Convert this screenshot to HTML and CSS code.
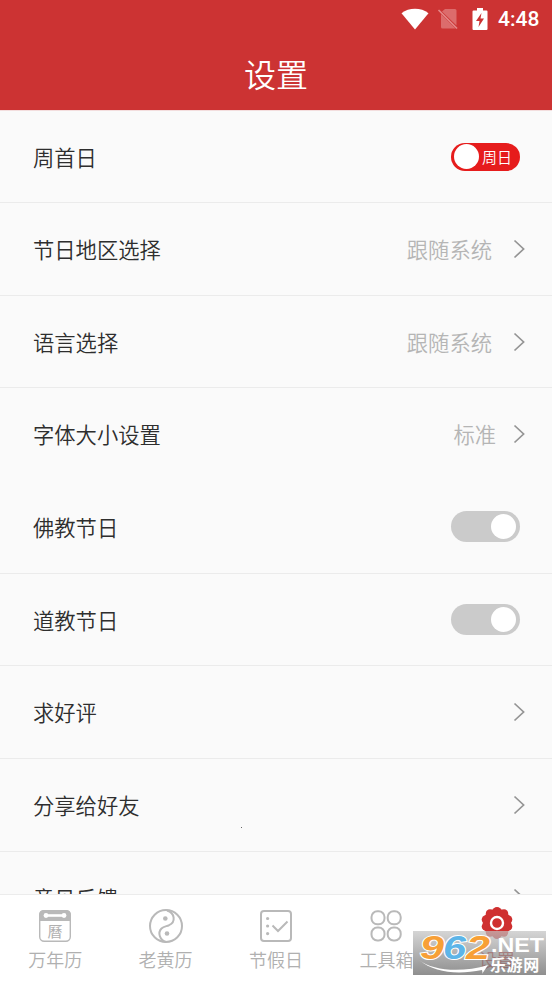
FILE: index.html
```html
<!DOCTYPE html>
<html lang="zh-CN">
<head>
<meta charset="utf-8">
<title>设置</title>
<link rel="stylesheet" href="styles.css">
</head>
<body>
<div class="app">
  <header class="header">
    <div class="status">
      <svg class="wifi" width="28" height="22" viewBox="0 0 28 22"><path d="M.5 5.200C8-.6 20-.6 27.500 5.200L14 21.500z" fill="#fff"/></svg>
      <svg class="sim" width="22" height="22" viewBox="0 0 22 22"><path d="M8 1h10q1.500 0 1.500 1.500v15L5 3.500zM4 6l14.500 14.500H5.500Q4 20.500 4 19z" fill="#dc6c6c"/><path d="M1.500 2l18.500 18.500" stroke="#e58a8a" stroke-width="1.600"/></svg>
      <svg class="battery" width="16" height="22" viewBox="0 0 16 22"><path d="M5 0h6v2.500h3.500q1 0 1 1V21q0 1-1 1h-13q-1 0-1-1V3.500q0-1 1-1H5z" fill="#fff"/><path d="M9.500 5L4 13h3.500l-1 6L12 10.500H8.500z" fill="#c33"/></svg>
      <span class="time">4:48</span>
    </div>
    <h1 class="title">设置</h1>
  </header>
  <main class="list">
    <div class="row"><span>周首日</span><span class="toggle toggle-on"><i class="knob"></i><b>周日</b></span></div>
    <div class="row"><span>节日地区选择</span><span class="value">跟随系统</span><svg class="chevron" viewBox="0 0 12 20"><path d="M1.500 1.500L10.600 10l-9.100 8.500"/></svg></div>
    <div class="row"><span>语言选择</span><span class="value">跟随系统</span><svg class="chevron" viewBox="0 0 12 20"><path d="M1.500 1.500L10.600 10l-9.100 8.500"/></svg></div>
    <div class="row plain"><span>字体大小设置</span><span class="value short">标准</span><svg class="chevron" viewBox="0 0 12 20"><path d="M1.500 1.500L10.600 10l-9.100 8.500"/></svg></div>
    <div class="row"><span>佛教节日</span><span class="toggle"><i class="knob"></i></span></div>
    <div class="row"><span>道教节日</span><span class="toggle"><i class="knob"></i></span></div>
    <div class="row"><span>求好评</span><svg class="chevron" viewBox="0 0 12 20"><path d="M1.500 1.500L10.600 10l-9.100 8.500"/></svg></div>
    <div class="row"><span>分享给好友</span><svg class="chevron" viewBox="0 0 12 20"><path d="M1.500 1.500L10.600 10l-9.100 8.500"/></svg><i class="speck"></i></div>
    <div class="row"><span>意见反馈</span><svg class="chevron" viewBox="0 0 12 20"><path d="M1.500 1.500L10.600 10l-9.100 8.500"/></svg></div>
  </main>
  <nav class="tabs">
    <div class="tab">
      <svg class="icon" viewBox="0 0 36 36" fill="none" stroke="#b9b9b9"><rect x="2.700" y="2.700" width="30.600" height="30.600" rx="4.500" stroke-width="1.400"/><path d="M2 13V7q0-5 5-5h22q5 0 5 5v6z" fill="#b9b9b9" stroke="none"/><path d="M10 7.500h16" stroke="#fff" stroke-width="2.600"/><circle cx="9" cy="7.500" r="2.400" fill="#fff" stroke="none"/><circle cx="27" cy="7.500" r="2.400" fill="#fff" stroke="none"/><text class="glyph" x="10.500" y="29.300">曆</text></svg>
      <span>万年历</span>
    </div>
    <div class="tab">
      <svg class="icon" viewBox="0 0 36 36" fill="none" stroke="#b9b9b9" stroke-width="2"><circle cx="18" cy="18" r="16"/><path d="M19 2.500C27 5 28 14 21 17.200c-3 1.200-5.500 1.300-7.500 3.300-4 4-2 11.500 4.500 13.500"/><circle cx="17.300" cy="10.500" r="2.300" fill="#b9b9b9" stroke="none"/><circle cx="19" cy="25.500" r="2.300" fill="#b9b9b9" stroke="none"/></svg>
      <span>老黄历</span>
    </div>
    <div class="tab">
      <svg class="icon" viewBox="0 0 36 36" fill="none" stroke="#b9b9b9" stroke-width="2"><rect x="3" y="3" width="30" height="30" rx="3"/><path d="M14.500 17.500l5.500 5.500 9.500-9.500"/><g fill="#b9b9b9" stroke="none"><circle cx="9.600" cy="10.500" r="1.600"/><circle cx="9.600" cy="18" r="1.600"/><circle cx="9.600" cy="25.600" r="1.600"/></g></svg>
      <span>节假日</span>
    </div>
    <div class="tab">
      <svg class="icon" viewBox="0 0 36 36" fill="none" stroke="#b9b9b9" stroke-width="2"><rect x="3.500" y="3.300" width="13" height="13" rx="5.800"/><rect x="19.700" y="3.300" width="13" height="13" rx="5.800"/><rect x="3.500" y="19.500" width="13" height="13" rx="5.800"/><rect x="19.700" y="19.500" width="13" height="13" rx="5.800"/></svg>
      <span>工具箱</span>
    </div>
    <div class="tab active">
      <svg class="icon" viewBox="0 0 36 36" fill="#cf3030"><circle cx="18" cy="15" r="14.200"/><circle cx="18" cy="3.500" r="4.500"/><circle cx="25" cy="5.500" r="4.200"/><circle cx="29" cy="11.500" r="4.300"/><circle cx="29" cy="18.500" r="4.300"/><circle cx="25" cy="24.500" r="4.200"/><circle cx="18" cy="26.500" r="4.500"/><circle cx="11" cy="24.500" r="4.200"/><circle cx="7" cy="18.500" r="4.300"/><circle cx="7" cy="11.500" r="4.300"/><circle cx="11" cy="5.500" r="4.200"/><circle cx="18" cy="15" r="6" fill="none" stroke="#fff" stroke-width="2.400"/></svg>
      <span>设置</span>
    </div>
  </nav>
  <div class="watermark">
    <svg width="133" height="44" viewBox="0 0 133 44">
      <g class="digits"><text x="7" y="28" textLength="24" lengthAdjust="spacingAndGlyphs" fill="#f7a037">9</text><text x="30" y="28" textLength="23" lengthAdjust="spacingAndGlyphs" fill="#5db5e8">6</text><text x="53" y="28" textLength="24" lengthAdjust="spacingAndGlyphs" fill="#f7a037">2</text></g>
      <path d="M6 29c14 11 43 13 69 5l-6 9c1-2 0-3 0-4-24 5-47 3-63-10z" fill="#fff"/>
      <text class="net" x="78" y="21" textLength="53" lengthAdjust="spacingAndGlyphs">.NET</text>
      <text class="site" x="77" y="39.500">乐游网</text>
    </svg>
  </div>
</div>
</body>
</html>
```
FILE: styles.css
```css
* { box-sizing: border-box; }
body {
  margin: 0;
  font-family: "Noto Sans CJK SC", sans-serif;
  font-weight: 350;
  color: #2e2e2e;
}
.app {
  position: relative;
  display: flex;
  flex-direction: column;
  height: 981px;
  overflow: hidden;
  background: #fafafa;
}
.header {
  flex: 0 0 110px;
  background: #cc3333;
  color: #fff;
}
.status {
  display: flex;
  justify-content: flex-end;
  align-items: center;
  height: 37px;
  padding-right: 13px;
}
.wifi { margin-right: 8px; }
.sim { margin-right: 13px; }
.battery { margin-right: 10px; }
.time {
  width: 41px;
  font: 500 21px/38px Roboto, sans-serif;
  white-space: nowrap;
}
.title {
  margin: 0;
  font-size: 32px;
  font-weight: 350;
  line-height: 72px;
  text-align: center;
}
.list {
  flex: 1;
  min-height: 0;
  overflow: hidden;
  border-top: 1px solid #f3dede;
}
.row {
  position: relative;
  display: flex;
  align-items: center;
  height: 92.7px;
  padding: 0 27px 0 33px;
  border-bottom: 1px solid #ebebeb;
  font-size: 21.3px;
}
.row:first-child { height: 92px; }
.row > span:not(.toggle) {
  position: relative;
  top: -.5px;
}
.row.plain { border-bottom-color: transparent; }
.value {
  margin-left: auto;
  margin-right: 21px;
  color: #b5b5b5;
}
.value.short { margin-right: 17px; }
.value + .chevron { margin-left: 0; }
.chevron {
  width: 12px;
  height: 20px;
  margin-left: auto;
  fill: none;
  stroke: #949494;
  stroke-width: 1.7;
}
.toggle {
  display: flex;
  align-items: center;
  justify-content: flex-end;
  width: 69px;
  height: 31px;
  margin: 0 5px 0 auto;
  padding: 0 4px;
  border-radius: 16px;
  background: #cbcbcb;
}
.knob {
  width: 25px;
  height: 25px;
  border-radius: 50%;
  background: #fff;
}
.toggle-on {
  justify-content: flex-start;
  height: 28px;
  padding: 0 3px;
  background: #e61c1c;
}
.toggle-on b {
  margin-left: 3px;
  color: #fff;
  font-size: 15px;
  font-weight: 350;
  line-height: 28px;
}
.speck {
  position: absolute;
  left: 241px;
  top: 68px;
  width: 1px;
  height: 1px;
  background: #666;
}
.tabs {
  display: flex;
  flex: 0 0 87px;
  border-top: 1px solid #ececec;
  background: #fff;
}
.tab {
  display: flex;
  flex: 1;
  flex-direction: column;
  align-items: center;
  padding-top: 13px;
  color: #b0b0b0;
  font-size: 18px;
  line-height: 30px;
}
.tab.active { color: #cf3030; }
.icon {
  width: 36px;
  height: 36px;
  overflow: visible;
}
.glyph {
  font: 15px "Noto Sans CJK TC", sans-serif;
  fill: #b0b0b0;
  stroke: none;
}
.watermark {
  position: absolute;
  left: 413px;
  top: 931px;
  width: 133px;
  height: 44px;
  background: linear-gradient(rgba(195, 195, 195, .7), rgba(115, 115, 115, .8));
}
.watermark svg { display: block; }
.digits {
  font: italic 700 34px "Liberation Sans", sans-serif;
  stroke: #fff;
  stroke-width: 2px;
  paint-order: stroke;
}
.net {
  font: 700 20px "Liberation Sans", sans-serif;
  fill: #fff;
}
.site {
  font: 700 16px "Noto Sans CJK SC", sans-serif;
  letter-spacing: .6px;
  fill: #fff;
}
```
